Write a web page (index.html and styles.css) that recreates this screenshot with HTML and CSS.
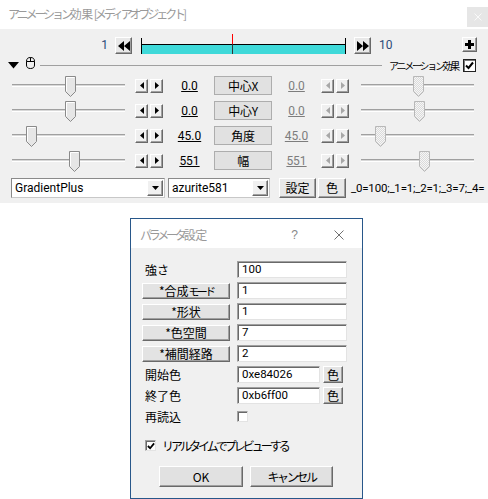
FILE: index.html
```html
<!DOCTYPE html>
<html lang="ja">
<head>
<meta charset="utf-8">
<title>アニメーション効果</title>
<link rel="stylesheet" href="styles.css">
</head>
<body>
<svg class="defs" width="0" height="0" aria-hidden="true">
  <defs>
    <pattern id="dots" width="2" height="2" patternUnits="userSpaceOnUse">
      <rect width="2" height="2" fill="#f6f6f6"/>
      <rect width="1" height="1" fill="#dadada"/>
      <rect x="1" y="1" width="1" height="1" fill="#dadada"/>
    </pattern>
  </defs>
</svg>
<div class="main">
  <div class="titlebar">
    <span class="title">アニメーション<span class="kj">効果</span>[メディアオブジェクト]</span>
    <span class="close"><svg width="8" height="8" viewBox="0 0 8 8"><path d="M0.5 0.5L7.5 7.5M7.5 0.5L0.5 7.5" stroke="#f9f9f9"/></svg></span>
  </div>
  <div class="timeline">
    <span class="frame start">1</span>
    <span class="b3d nav"><svg width="12" height="10" viewBox="0 0 12 10"><path d="M6 0V10L0 5Z M12 0V10L6 5Z" fill="#000"/></svg></span>
    <div class="track"><span class="cursor"></span></div>
    <span class="b3d nav"><svg width="12" height="10" viewBox="0 0 12 10"><path d="M0 0V10L6 5Z M6 0V10L12 5Z" fill="#000"/></svg></span>
    <span class="frame end">10</span>
    <span class="b3d plus"><svg width="9" height="9" viewBox="0 0 9 9"><path d="M3 0H6V3H9V6H6V9H3V6H0V3H3Z" fill="#000"/></svg></span>
  </div>
  <div class="header">
    <svg class="tri" width="11" height="7" viewBox="0 0 11 7"><path d="M0 0H11L5.5 6.5Z" fill="#000"/></svg>
    <svg class="mouse" width="9" height="12" viewBox="0 0 9 12"><path d="M0.5 4.5C0.5 1.5 2 0.5 4.5 0.5S8.5 1.5 8.5 4.5V8C8.5 10.5 7 11.5 4.5 11.5S0.5 10.5 0.5 8Z M4.5 0.5V4.5 M0.5 4.5H8.5" fill="none" stroke="#000"/></svg>
    <span class="hline"></span>
    <span class="hlabel">アニメーション効果</span>
    <span class="check"><svg width="9" height="9" viewBox="0 0 9 9"><path d="M1 4.5L3.5 7L8 1.5" fill="none" stroke="#000" stroke-width="2"/></svg></span>
  </div>

  <div class="prows">
    <div class="prow">
      <div class="slider"><span class="groove"></span><svg class="thumb" style="left:53px" width="11" height="21" viewBox="0 0 11 21"><path d="M0.5 0.5H10.5V15.5L5.5 20.5L0.5 15.5Z" fill="#e6e6e6" stroke="#8a8a8a"/><path d="M1.5 15V1.5H9.5" fill="none" stroke="#fff"/></svg></div>
      <div class="arrows"><span class="b3d arr"><svg width="4" height="7" viewBox="0 0 4 7"><path d="M4 0V7L0 3.5Z" fill="#000"/></svg></span><span class="b3d arr"><svg width="4" height="7" viewBox="0 0 4 7"><path d="M0 0V7L4 3.5Z" fill="#000"/></svg></span></div>
      <span class="val">0.0</span>
      <span class="wbtn pbtn">中心X</span>
      <span class="val dis">0.0</span>
      <div class="arrows"><span class="b3d arr"><svg width="4" height="7" viewBox="0 0 4 7"><path d="M4 0V7L0 3.5Z" fill="#a8a8a8"/></svg></span><span class="b3d arr"><svg width="4" height="7" viewBox="0 0 4 7"><path d="M0 0V7L4 3.5Z" fill="#a8a8a8"/></svg></span></div>
      <div class="slider right"><span class="groove"></span><svg class="thumb" style="left:52px" width="11" height="21" viewBox="0 0 11 21"><path d="M0.5 0.5H10.5V15.5L5.5 20.5L0.5 15.5Z" fill="url(#dots)" stroke="#b8b8b8"/></svg></div>
    </div>
    <div class="prow">
      <div class="slider"><span class="groove"></span><svg class="thumb" style="left:53px" width="11" height="21" viewBox="0 0 11 21"><path d="M0.5 0.5H10.5V15.5L5.5 20.5L0.5 15.5Z" fill="#e6e6e6" stroke="#8a8a8a"/><path d="M1.5 15V1.5H9.5" fill="none" stroke="#fff"/></svg></div>
      <div class="arrows"><span class="b3d arr"><svg width="4" height="7" viewBox="0 0 4 7"><path d="M4 0V7L0 3.5Z" fill="#000"/></svg></span><span class="b3d arr"><svg width="4" height="7" viewBox="0 0 4 7"><path d="M0 0V7L4 3.5Z" fill="#000"/></svg></span></div>
      <span class="val">0.0</span>
      <span class="wbtn pbtn">中心Y</span>
      <span class="val dis">0.0</span>
      <div class="arrows"><span class="b3d arr"><svg width="4" height="7" viewBox="0 0 4 7"><path d="M4 0V7L0 3.5Z" fill="#a8a8a8"/></svg></span><span class="b3d arr"><svg width="4" height="7" viewBox="0 0 4 7"><path d="M0 0V7L4 3.5Z" fill="#a8a8a8"/></svg></span></div>
      <div class="slider right"><span class="groove"></span><svg class="thumb" style="left:53px" width="11" height="21" viewBox="0 0 11 21"><path d="M0.5 0.5H10.5V15.5L5.5 20.5L0.5 15.5Z" fill="url(#dots)" stroke="#b8b8b8"/></svg></div>
    </div>
    <div class="prow">
      <div class="slider"><span class="groove"></span><svg class="thumb" style="left:14px" width="11" height="21" viewBox="0 0 11 21"><path d="M0.5 0.5H10.5V15.5L5.5 20.5L0.5 15.5Z" fill="#e6e6e6" stroke="#8a8a8a"/><path d="M1.5 15V1.5H9.5" fill="none" stroke="#fff"/></svg></div>
      <div class="arrows"><span class="b3d arr"><svg width="4" height="7" viewBox="0 0 4 7"><path d="M4 0V7L0 3.5Z" fill="#000"/></svg></span><span class="b3d arr"><svg width="4" height="7" viewBox="0 0 4 7"><path d="M0 0V7L4 3.5Z" fill="#000"/></svg></span></div>
      <span class="val">45.0</span>
      <span class="wbtn pbtn">角度</span>
      <span class="val dis">45.0</span>
      <div class="arrows"><span class="b3d arr"><svg width="4" height="7" viewBox="0 0 4 7"><path d="M4 0V7L0 3.5Z" fill="#a8a8a8"/></svg></span><span class="b3d arr"><svg width="4" height="7" viewBox="0 0 4 7"><path d="M0 0V7L4 3.5Z" fill="#a8a8a8"/></svg></span></div>
      <div class="slider right"><span class="groove"></span><svg class="thumb" style="left:14px" width="11" height="21" viewBox="0 0 11 21"><path d="M0.5 0.5H10.5V15.5L5.5 20.5L0.5 15.5Z" fill="url(#dots)" stroke="#b8b8b8"/></svg></div>
    </div>
    <div class="prow">
      <div class="slider"><span class="groove"></span><svg class="thumb" style="left:57px" width="11" height="21" viewBox="0 0 11 21"><path d="M0.5 0.5H10.5V15.5L5.5 20.5L0.5 15.5Z" fill="#e6e6e6" stroke="#8a8a8a"/><path d="M1.5 15V1.5H9.5" fill="none" stroke="#fff"/></svg></div>
      <div class="arrows"><span class="b3d arr"><svg width="4" height="7" viewBox="0 0 4 7"><path d="M4 0V7L0 3.5Z" fill="#000"/></svg></span><span class="b3d arr"><svg width="4" height="7" viewBox="0 0 4 7"><path d="M0 0V7L4 3.5Z" fill="#000"/></svg></span></div>
      <span class="val">551</span>
      <span class="wbtn pbtn">幅</span>
      <span class="val dis">551</span>
      <div class="arrows"><span class="b3d arr"><svg width="4" height="7" viewBox="0 0 4 7"><path d="M4 0V7L0 3.5Z" fill="#a8a8a8"/></svg></span><span class="b3d arr"><svg width="4" height="7" viewBox="0 0 4 7"><path d="M0 0V7L4 3.5Z" fill="#a8a8a8"/></svg></span></div>
      <div class="slider right"><span class="groove"></span><svg class="thumb" style="left:58px" width="11" height="21" viewBox="0 0 11 21"><path d="M0.5 0.5H10.5V15.5L5.5 20.5L0.5 15.5Z" fill="url(#dots)" stroke="#b8b8b8"/></svg></div>
    </div>
  </div>

  <div class="crow">
    <div class="combo c1"><span class="ctext">GradientPlus</span><span class="b3d drop"><svg width="7" height="4" viewBox="0 0 7 4"><path d="M0 0H7L3.5 4Z" fill="#000"/></svg></span></div>
    <div class="combo c2"><span class="ctext">azurite581</span><span class="b3d drop"><svg width="7" height="4" viewBox="0 0 7 4"><path d="M0 0H7L3.5 4Z" fill="#000"/></svg></span></div>
    <span class="b3d sbtn set">設定</span>
    <span class="b3d sbtn col">色</span>
    <span class="params">_0=100;_1=1;_2=1;_3=7;_4=</span>
  </div>
</div>

<div class="dialog">
  <div class="dtitle">
    <span class="dtext">パラメータ<span class="kj">設定</span></span>
    <span class="help">?</span>
    <svg class="dclose" width="10" height="10" viewBox="0 0 10 10"><path d="M0.5 0.5L9.5 9.5M9.5 0.5L0.5 9.5" stroke="#707070"/></svg>
  </div>
  <div class="dbody">
    <div class="drow"><span class="dlabel">強さ</span><span class="edit">100</span></div>
    <div class="drow"><span class="b3d dbtn">*合成<span class="kn">モード</span></span><span class="edit">1</span></div>
    <div class="drow"><span class="b3d dbtn">*形状</span><span class="edit">1</span></div>
    <div class="drow"><span class="b3d dbtn">*色空間</span><span class="edit">7</span></div>
    <div class="drow"><span class="b3d dbtn">*補間経路</span><span class="edit">2</span></div>
    <div class="drow"><span class="dlabel">開始色</span><span class="edit short">0xe84026</span><span class="b3d cbtn">色</span></div>
    <div class="drow"><span class="dlabel">終了色</span><span class="edit short">0xb6ff00</span><span class="b3d cbtn">色</span></div>
    <div class="drow"><span class="dlabel">再読込</span><span class="cb"></span></div>
    <div class="drow live"><span class="cb"><svg width="9" height="9" viewBox="0 0 9 9"><path d="M1 4.5L3.5 7L8 1.5" fill="none" stroke="#000" stroke-width="2"/></svg></span><span class="livetext">リアルタイムでプレビューする</span></div>
    <div class="dbuttons"><span class="b3d okbtn ok">OK</span><span class="b3d okbtn cancel">キャンセル</span></div>
  </div>
</div>
</body>
</html>
```

FILE: styles.css
```css
* { box-sizing: border-box; }

body {
  margin: 0;
  width: 488px;
  height: 499px;
  overflow: hidden;
  background: #ffffff;
  font-family: "Noto Sans CJK JP", "Noto Sans", sans-serif;
  font-size: 12px;
  color: #000;
}

.defs { position: absolute; width: 0; height: 0; }

.main {
  height: 203px;
  background: #f0f0f0;
  display: flex;
  flex-direction: column;
  overflow: hidden;
}

/* title bar */
.titlebar {
  height: 29px;
  flex: none;
  background: #fff;
  display: flex;
  align-items: flex-start;
}
.title {
  margin-left: 8px;
  margin-top: 7px;
  color: #9a9a9a;
  font-size: 12px;
  line-height: 14px;
  letter-spacing: -3.1px;
  white-space: nowrap;
}
.kj { letter-spacing: -0.5px; padding-right: 1px; }
.close {
  margin-left: auto;
  margin-top: 7px;
  width: 21px;
  height: 20px;
  background: #e6e6e6;
  display: flex;
  align-items: center;
  justify-content: center;
}

/* 3D classic button */
.b3d {
  display: flex;
  align-items: center;
  justify-content: center;
  background: #f0f0f0;
  border: 1px solid;
  border-color: #fff #696969 #696969 #fff;
  box-shadow: inset -1px -1px 0 #a0a0a0;
  flex: none;
}

/* timeline */
.timeline {
  margin-top: 8px;
  height: 17px;
  flex: none;
  display: flex;
  align-items: flex-start;
}
.frame {
  font-family: Roboto, "Liberation Sans", sans-serif;
  font-size: 12px;
  line-height: 17px;
  color: #2b4a78;
}
.frame.start {
  width: 111px;
  text-align: right;
  padding-right: 3px;
}
.frame.end { margin-left: 7px; }
.nav { width: 17px; height: 17px; margin-left: 4px; background: #e8e8e8; }
.timeline .nav + .frame { margin-left: 8px; }
.track {
  position: relative;
  margin-left: 9px;
  margin-top: 1px;
  width: 205px;
  height: 16px;
  border-left: 1px solid #000;
  border-right: 1px solid #000;
  background: linear-gradient(to bottom, transparent 6px, #000 6px, #000 7px, #3fd9d9 7px);
}
.track + .nav { margin-left: 8px; }
.cursor {
  position: absolute;
  left: 90px;
  top: -4px;
  width: 1px;
  height: 20px;
  background: linear-gradient(to bottom, #ff0000 10px, #333 10px);
}
.plus {
  margin-left: auto;
  margin-right: 11px;
  width: 15px;
  height: 15px;
  background: #f0f0f0;
}

/* header row */
.header {
  margin-top: 2px;
  height: 17px;
  flex: none;
  display: flex;
  align-items: flex-start;
}
.tri { margin-left: 8px; margin-top: 6px; flex: none; }
.mouse { margin-left: 7px; margin-top: 1px; flex: none; }
.hline {
  flex: 1;
  margin-left: 5px;
  margin-right: 7px;
  margin-top: 9px;
  border-top: 1px solid #a0a0a0;
}
.hlabel {
  font-size: 10px;
  line-height: 12px;
  margin-top: 4px;
  letter-spacing: -2.3px;
  white-space: nowrap;
}
.check {
  margin-left: 5px;
  margin-right: 12px;
  margin-top: 3px;
  width: 13px;
  height: 13px;
  background: #fff;
  border: 1px solid #222;
  box-shadow: inset 1px 1px 0 #7a7a7a;
  display: flex;
  align-items: center;
  justify-content: center;
  flex: none;
}

/* parameter rows */
.prows { flex: none; display: flex; flex-direction: column; }
.prow {
  height: 25px;
  display: flex;
  align-items: center;
}
.slider {
  position: relative;
  margin-left: 12px;
  width: 113px;
  height: 25px;
  display: flex;
  align-items: center;
  flex: none;
}
.slider.right { margin-left: 12px; }
.groove {
  width: 100%;
  height: 3px;
  border-top: 1px solid #a0a0a0;
  border-bottom: 1px solid #fff;
  background: #d8d8d8;
}
.thumb { position: absolute; top: 3px; }
.arrows {
  margin-left: 10px;
  display: flex;
  gap: 2px;
  flex: none;
}
.slider + .arrows { margin-left: 10px; }
.val + .wbtn + .val + .arrows { margin-left: 0; }
.arr { width: 13px; height: 14px; }
.val {
  width: 51px;
  flex: none;
  text-align: center;
  padding-left: 2px;
  font-family: Roboto, "Liberation Sans", sans-serif;
  font-size: 12px;
  line-height: 16px;
  text-decoration: underline;
  color: #000;
}
.val.dis { width: 49px; padding-left: 0; color: #7d7d7d; }
.wbtn {
  display: flex;
  align-items: center;
  justify-content: center;
  background: #e1e1e1;
  border: 1px solid #adadad;
  flex: none;
}
.pbtn {
  width: 58px;
  height: 19px;
  font-size: 12px;
  letter-spacing: -0.3px;
  line-height: 17px;
}

/* combo row */
.crow {
  margin-top: 5px;
  height: 20px;
  flex: none;
  display: flex;
  align-items: center;
}
.combo {
  height: 20px;
  background: #fff;
  border: 1px solid;
  border-color: #8a8a8a #c8c8c8 #c8c8c8 #8a8a8a;
  display: flex;
  align-items: center;
  flex: none;
}
.c1 { margin-left: 11px; width: 154px; }
.c2 { margin-left: 3px; width: 102px; }
.ctext {
  flex: 1;
  padding-left: 3px;
  font-family: Roboto, "Liberation Sans", sans-serif;
  font-size: 12px;
  line-height: 16px;
  white-space: nowrap;
  overflow: hidden;
}
.drop { width: 16px; height: 16px; margin-right: 1px; }
.sbtn { height: 20px; font-size: 12px; line-height: 16px; background: #e8e8e8; }
.set { margin-left: 9px; width: 37px; }
.col { margin-left: 2px; width: 28px; }
.params {
  margin-left: 5px;
  font-family: Roboto, "Liberation Sans", sans-serif;
  font-size: 11.5px;
  letter-spacing: -0.2px;
  line-height: 16px;
  white-space: nowrap;
}

/* dialog */
.dialog {
  margin-left: 130px;
  margin-top: 15px;
  width: 233px;
  height: 281px;
  border: 1px solid #28578a;
  display: flex;
  flex-direction: column;
}
.dtitle {
  height: 29px;
  flex: none;
  background: #fff;
  display: flex;
  align-items: center;
  padding-left: 9px;
}
.dtext {
  color: #999;
  font-size: 12px;
  line-height: 14px;
  letter-spacing: -3.2px;
  margin-top: 3px;
  white-space: nowrap;
}
.help {
  margin-left: auto;
  color: #888;
  font-family: "Liberation Sans", sans-serif;
  font-size: 12px;
  line-height: 14px;
  margin-top: 3px;
}
.dclose { margin-left: 36px; margin-right: 18px; margin-top: 3px; flex: none; }
.dbody {
  flex: 1;
  background: #f0f0f0;
  padding: 13px 0 0 11px;
  display: flex;
  flex-direction: column;
}
.drow {
  height: 17px;
  margin-bottom: 4px;
  display: flex;
  align-items: center;
  flex: none;
}
.dlabel {
  width: 95px;
  padding-left: 3px;
  font-size: 12px;
  line-height: 17px;
  flex: none;
}
.dbtn {
  width: 88px;
  height: 16px;
  margin-right: 7px;
  background: #e3e3e3;
  font-size: 12px;
  line-height: 14px;
}
.kn { font-size: 11px; letter-spacing: -2.8px; }
.edit {
  width: 110px;
  height: 17px;
  background: #fff;
  border: 1px solid;
  border-color: #a0a0a0 #e3e3e3 #e3e3e3 #a0a0a0;
  box-shadow: inset 1px 1px 0 #696969;
  padding-left: 4px;
  font-family: Roboto, "Liberation Sans", sans-serif;
  font-size: 11.5px;
  line-height: 15px;
  flex: none;
}
.edit.short { width: 83px; }
.cbtn {
  margin-left: 3px;
  width: 20px;
  height: 17px;
  background: #e3e3e3;
  font-size: 12px;
  line-height: 15px;
}
.cb {
  width: 11px;
  height: 11px;
  background: #fff;
  border: 1px solid;
  border-color: #a0a0a0 #e3e3e3 #e3e3e3 #a0a0a0;
  box-shadow: inset 1px 1px 0 #696969;
  display: flex;
  align-items: center;
  justify-content: center;
  flex: none;
}
.cb svg { width: 8px; height: 8px; }
.drow.live { margin-top: 8px; padding-left: 3px; }
.livetext {
  margin-left: 6px;
  font-size: 12px;
  line-height: 15px;
  letter-spacing: -3px;
  white-space: nowrap;
}
.dbuttons {
  margin-top: 8px;
  margin-left: 17px;
  display: flex;
  gap: 7px;
}
.okbtn {
  height: 21px;
  background: #e1e1e1;
  font-size: 12px;
  line-height: 17px;
}
.ok { width: 84px; }
.cancel { width: 83px; letter-spacing: -2.4px; }
```
